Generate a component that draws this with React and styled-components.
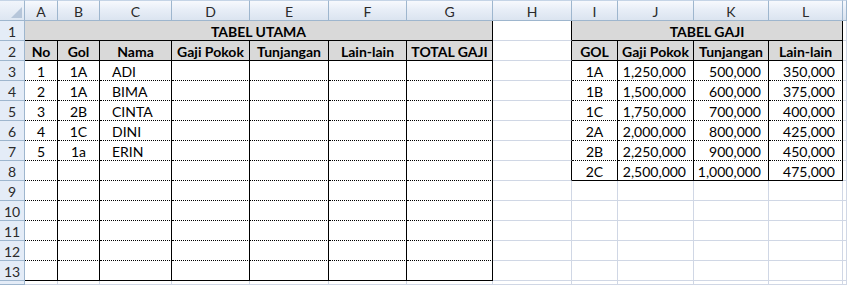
import React from "react";
import styled, { createGlobalStyle, css } from "styled-components";

const GlobalStyle = createGlobalStyle`
  html, body { margin: 0; padding: 0; background: #fff; }
  body { overflow: hidden; font-family: Lato, "Open Sans", "Liberation Sans", sans-serif; }
`;

const COL_WIDTHS = [33, 42, 72, 78, 79, 78, 86, 79, 46, 76, 75, 74];
const LETTERS = ["A", "B", "C", "D", "E", "F", "G", "H", "I", "J", "K", "L"];

const GRID = "#D0D7E5";
const HEAD_LINE = "#9EB6CE";

const borderOf = (kind) => {
  switch (kind) {
    case "solid":
      return "1px solid #000";
    case "dot":
      return "1px dotted #000";
    case "head":
      return `1px solid ${HEAD_LINE}`;
    case "none":
      return "1px solid transparent";
    default:
      return `1px solid ${GRID}`;
  }
};

const Sheet = styled.div`
  display: grid;
  grid-template-columns: 25px ${COL_WIDTHS.map((w) => `${w}px`).join(" ")} 1fr;
  grid-template-rows: 21px repeat(13, 20px) 1fr;
  width: 847px;
  height: 285px;
  overflow: hidden;
  background: #fff;
  font-size: 14px;
  color: #000;
`;

const Corner = styled.div`
  position: relative;
  box-sizing: border-box;
  border-right: 1px solid ${HEAD_LINE};
  border-bottom: 1px solid ${HEAD_LINE};
  border-top: 1px solid #c5d4e6;
  background: linear-gradient(#f1f5fb, #dde6f2);
  svg {
    position: absolute;
    right: 2px;
    bottom: 2px;
  }
`;

const ColHeader = styled.div`
  box-sizing: border-box;
  display: flex;
  align-items: center;
  justify-content: center;
  border-right: 1px solid ${HEAD_LINE};
  border-bottom: 1px solid ${HEAD_LINE};
  border-top: 1px solid #c5d4e6;
  background: linear-gradient(#f7f9fd 0%, #e8eef7 45%, #dbe4f0 100%);
  color: #2a2a2a;
  font-size: 14px;
  padding-top: 1px;
  overflow: hidden;
`;

const RowHeader = styled.div`
  box-sizing: border-box;
  display: flex;
  align-items: center;
  justify-content: center;
  border-right: 1px solid ${HEAD_LINE};
  border-bottom: 1px solid ${HEAD_LINE};
  background: #e4ecf7;
  color: #2a2a2a;
  font-size: 14px;
  padding-top: 1px;
  overflow: hidden;
`;

const Cell = styled.div`
  box-sizing: border-box;
  display: flex;
  align-items: center;
  overflow: hidden;
  white-space: nowrap;
  padding-top: 2px;
  grid-column: span ${(p) => p.$span || 1};
  border-right: ${(p) => borderOf(p.$right)};
  border-bottom: ${(p) => borderOf(p.$bottom)};
  background: ${(p) => (p.$fill ? "#D9D9D9" : "#fff")};
  font-weight: ${(p) => (p.$bold ? 700 : 400)};
  ${(p) =>
    p.$align === "left"
      ? css`
          justify-content: flex-start;
          padding-left: 12px;
        `
      : p.$align === "right"
      ? css`
          justify-content: flex-end;
          padding-right: 7px;
        `
      : css`
          justify-content: center;
        `}
`;

const MAIN_HEAD = ["No", "Gol", "Nama", "Gaji Pokok", "Tunjangan", "Lain-lain", "TOTAL GAJI"];
const MAIN_DATA = [
  ["1", "1A", "ADI"],
  ["2", "1A", "BIMA"],
  ["3", "2B", "CINTA"],
  ["4", "1C", "DINI"],
  ["5", "1a", "ERIN"],
];
const GAJI_HEAD = ["GOL", "Gaji Pokok", "Tunjangan", "Lain-lain"];
const GAJI_DATA = [
  ["1A", "1,250,000", "500,000", "350,000"],
  ["1B", "1,500,000", "600,000", "375,000"],
  ["1C", "1,750,000", "700,000", "400,000"],
  ["2A", "2,000,000", "800,000", "425,000"],
  ["2B", "2,250,000", "900,000", "450,000"],
  ["2C", "2,500,000", "1,000,000", "475,000"],
];

function buildRow(r) {
  const cells = [];
  const key = (c) => `${r}-${c}`;

  // Main table A..G
  if (r === 1) {
    cells.push(
      <Cell key={key("A")} $span={7} $fill $bold $right="solid" $bottom="solid">
        TABEL UTAMA
      </Cell>
    );
  } else if (r === 2) {
    MAIN_HEAD.forEach((h, i) =>
      cells.push(
        <Cell key={key(i)} $fill $bold $right="solid" $bottom="solid">
          {h}
        </Cell>
      )
    );
  } else if (r <= 13) {
    const d = MAIN_DATA[r - 3] || ["", "", ""];
    const bottom = r === 13 ? "solid" : "dot";
    for (let i = 0; i < 7; i++) {
      cells.push(
        <Cell key={key(i)} $align={i === 2 ? "left" : "center"} $right="solid" $bottom={bottom}>
          {d[i] || ""}
        </Cell>
      );
    }
  } else {
    for (let i = 0; i < 7; i++) {
      cells.push(<Cell key={key(i)} $right="grid" $bottom="grid" />);
    }
  }

  // H column
  cells.push(
    <Cell key={key("H")} $right={r <= 8 ? "solid" : "grid"} $bottom="grid" />
  );

  // Gaji table I..L
  if (r === 1) {
    cells.push(
      <Cell key={key("I")} $span={4} $fill $bold $right="solid" $bottom="solid">
        TABEL GAJI
      </Cell>
    );
  } else if (r === 2) {
    GAJI_HEAD.forEach((h, i) =>
      cells.push(
        <Cell key={key("g" + i)} $fill $bold $right="solid" $bottom="solid">
          {h}
        </Cell>
      )
    );
  } else if (r <= 8) {
    const d = GAJI_DATA[r - 3];
    const bottom = r === 8 ? "solid" : "dot";
    d.forEach((v, i) =>
      cells.push(
        <Cell key={key("g" + i)} $align={i === 0 ? "center" : "right"} $right="solid" $bottom={bottom}>
          {v}
        </Cell>
      )
    );
  } else {
    for (let i = 0; i < 4; i++) {
      cells.push(<Cell key={key("g" + i)} $right="grid" $bottom="grid" />);
    }
  }

  // M partial
  cells.push(<Cell key={key("M")} $right="grid" $bottom="grid" />);
  return cells;
}

export default function App() {
  const rows = [];
  for (let r = 1; r <= 14; r++) {
    rows.push(<RowHeader key={`rh${r}`}>{r <= 13 ? r : ""}</RowHeader>);
    rows.push(...buildRow(r));
  }
  return (
    <>
      <GlobalStyle />
      <Sheet>
        <Corner>
          <svg width="11" height="11" viewBox="0 0 11 11">
            <polygon points="11,0 11,11 0,11" fill="#b6c6da" />
          </svg>
        </Corner>
        {LETTERS.map((l) => (
          <ColHeader key={l}>{l}</ColHeader>
        ))}
        <ColHeader />
        {rows}
      </Sheet>
    </>
  );
}
